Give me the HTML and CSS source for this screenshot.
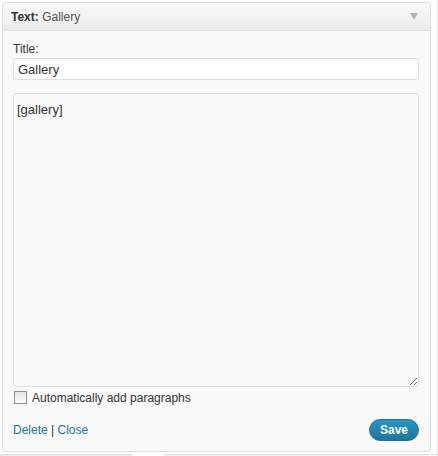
FILE: index.html
```html
<!DOCTYPE html>
<html>
<head>
<meta charset="utf-8">
<link rel="stylesheet" href="styles.css">
</head>
<body>
<div class="page">
  <div class="widget">
    <div class="widget-top">
      <div class="widget-title"><strong>Text:</strong> <span class="in-title">Gallery</span></div>
      <span class="arrow"></span>
    </div>
    <div class="widget-inside">
      <label class="lbl" for="t">Title:</label>
      <input id="t" class="field" type="text" value="Gallery">
      <textarea class="area">[gallery]</textarea>
      <div class="check-row">
        <span class="cb"></span>
        <span class="cb-label">Automatically add paragraphs</span>
      </div>
      <div class="actions">
        <div class="links"><a href="#">Delete</a> | <a href="#">Close</a></div>
        <button class="save">Save</button>
      </div>
    </div>
  </div>
  <div class="under">
    <div class="u1"></div>
    <div class="u2"></div>
    <div class="u3"></div>
  </div>
</div>
</body>
</html>
```
FILE: styles.css
```css
html, body {
  margin: 0;
  padding: 0;
  background: #ffffff;
  font-family: "Liberation Sans", Arial, sans-serif;
  font-size: 12px;
  color: #333;
}
.page {
  width: 438px;
  height: 456px;
  position: relative;
  overflow: hidden;
  border-right: 1px solid #e6e6e6;
  box-sizing: border-box;
}
.widget {
  margin: 2px 0 0 2px;
  width: 429px;
  border: 1px solid #dfdfdf;
  border-radius: 3px;
  background: #f9f9f9;
  box-sizing: border-box;
}
.widget-top {
  height: 27px;
  display: flex;
  align-items: center;
  justify-content: space-between;
  padding: 0 12px 0 8px;
  background: linear-gradient(#f9f9f9, #ececec);
  border-bottom: 1px solid #dfdfdf;
  border-radius: 3px 3px 0 0;
}
.widget-title {
  font-size: 12px;
  color: #464646;
}
.widget-title strong {
  font-weight: bold;
  color: #333;
}
.in-title {
  color: #555;
}
.arrow {
  width: 0;
  height: 0;
  border-left: 4px solid transparent;
  border-right: 4px solid transparent;
  border-top: 7px solid #b4b4b4;
}
.widget-inside {
  padding: 11px 10px 10px 10px;
}
.lbl {
  display: block;
  font-size: 12px;
  color: #333;
  line-height: 15px;
}
.field {
  display: block;
  width: 406px;
  height: 22px;
  margin: 1px 0 13px 0;
  border: 1px solid #dfdfdf;
  border-radius: 3px;
  background: #fff;
  font-family: "Liberation Sans", Arial, sans-serif;
  font-size: 13px;
  color: #333;
  padding: 2px 4px;
  box-sizing: border-box;
}
.area {
  display: block;
  width: 406px;
  height: 294px;
  margin: 0;
  border: 1px solid #dfdfdf;
  border-radius: 3px;
  background: #f9f9f9;
  font-family: "Liberation Sans", Arial, sans-serif;
  font-size: 13px;
  color: #333;
  padding: 8px 3px;
  box-sizing: border-box;
  resize: vertical;
}
.check-row {
  display: flex;
  align-items: center;
  margin-top: 3px;
  height: 15px;
}
.cb {
  width: 11px;
  height: 11px;
  border: 1px solid #8f8f8f;
  background: linear-gradient(#e5e5e5, #fbfbfb);
  margin: 0 5px 0 1px;
}
.cb-label {
  color: #333;
}
.actions {
  display: flex;
  justify-content: space-between;
  align-items: center;
  margin-top: 14px;
}
.links {
  color: #333;
}
.links a {
  color: #21759b;
  text-decoration: none;
}
.save {
  height: 22px;
  padding: 0 10px;
  border: 1px solid #21759b;
  border-radius: 11px;
  background: linear-gradient(#2a95c5, #21759b);
  color: #fff;
  font-family: "Liberation Sans", Arial, sans-serif;
  font-weight: bold;
  font-size: 12px;
  margin-right: 1px;
}
.under {
  display: flex;
  margin-top: 2px;
  height: 10px;
}
.u1 { width: 131px; background: #ececec; border-top: 1px solid #e0e0e0; }
.u2 { width: 32px; background: #fff; border-left: 1px solid #e0e0e0; border-right: 1px solid #e0e0e0; }
.u3 { flex: 1; background: #f5f5f5; border-top: 1px solid #e0e0e0; }
```
